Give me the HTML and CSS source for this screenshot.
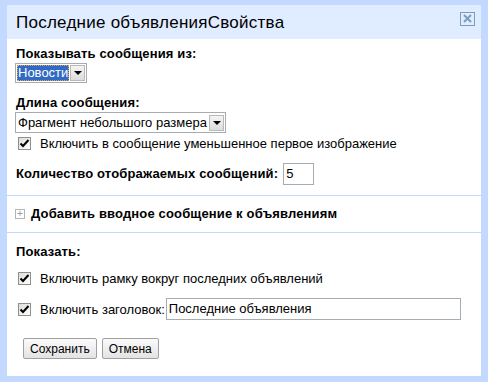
FILE: index.html
```html
<!DOCTYPE html>
<html lang="ru">
<head>
    <meta charset="UTF-8">
    <title>Последние объявления - Свойства</title>
    <link rel="stylesheet" href="styles.css">
</head>
<body>
<div class="dialog">
    <div class="dialog-header">
        <span class="dialog-title">Последние объявленияСвойства</span>
        <span class="close-box">
            <svg width="13" height="12" viewBox="0 0 13 12">
                <path d="M3 2 L10 9 M10 2 L3 9" stroke="#7b9ebd" stroke-width="2"/>
            </svg>
        </span>
    </div>

    <div class="section section-main">
        <div class="label">Показывать сообщения из:</div>
        <div class="select select-source">
            <span class="select-value selected">Новости</span>
            <span class="select-arrow"></span>
        </div>

        <div class="label label-gap">Длина сообщения:</div>
        <div class="select select-length">
            <span class="select-value">Фрагмент небольшого размера</span>
            <span class="select-arrow"></span>
        </div>
        <div class="check-row check-row-first">
            <span class="check"><svg width="11" height="11" viewBox="0 0 11 11"><path d="M1.5 5.5 L4 8 L9.5 2" fill="none" stroke="#000" stroke-width="2"/></svg></span>
            <span>Включить в сообщение уменьшенное первое изображение</span>
        </div>

        <div class="count-row">
            <span class="label">Количество отображаемых сообщений:</span>
            <span class="text-input count-input">5</span>
        </div>
    </div>

    <div class="section section-intro">
        <span class="plus-box">+</span>
        <span class="label">Добавить вводное сообщение к объявлениям</span>
    </div>

    <div class="section section-show">
        <div class="label">Показать:</div>
        <div class="check-row check-row-frame">
            <span class="check"><svg width="11" height="11" viewBox="0 0 11 11"><path d="M1.5 5.5 L4 8 L9.5 2" fill="none" stroke="#000" stroke-width="2"/></svg></span>
            <span>Включить рамку вокруг последних объявлений</span>
        </div>
        <div class="check-row check-row-title">
            <span class="check"><svg width="11" height="11" viewBox="0 0 11 11"><path d="M1.5 5.5 L4 8 L9.5 2" fill="none" stroke="#000" stroke-width="2"/></svg></span>
            <span class="title-label">Включить заголовок:</span>
            <span class="text-input title-input">Последние объявления</span>
        </div>
        <div class="buttons">
            <button class="button">Сохранить</button>
            <button class="button">Отмена</button>
        </div>
    </div>
</div>
</body>
</html>
```

FILE: styles.css
```css
body {
    background-color: #c3d9ff;
    margin: 0;
    padding: 0;
    font-size: 13px;
    font-family: "Liberation Sans", Arial, sans-serif;
    color: #000;
}
.dialog {
    margin: 5px 0 0 7px;
    width: 474px;
    height: 371px;
    background-color: #fff;
    display: flex;
    flex-direction: column;
}
.dialog-header {
    height: 34px;
    background-color: #e0ecff;
    display: flex;
    justify-content: space-between;
    align-items: center;
    padding: 0 6px 0 9px;
}
.dialog-title {
    font-size: 17px;
    letter-spacing: 0.25px;
    margin-top: 1px;
}
.close-box {
    align-self: flex-start;
    margin-top: 7px;
    width: 13px;
    height: 12px;
    border: 1px solid #7b9ebd;
    display: flex;
}
.section {
    padding: 0 9px;
    border-bottom: 1px solid #c3d9ff;
}
.section-main {
    padding-top: 7px;
    padding-bottom: 10px;
}
.label {
    font-weight: bold;
    line-height: 16px;
    letter-spacing: 0.15px;
}
.label-gap {
    margin-top: 12px;
}
.select {
    display: inline-flex;
    align-items: center;
    border: 1px solid #a5acb2;
    margin-left: -1px;
    background-color: #fff;
    padding: 1px;
    height: 16px;
}
.select-source {
    margin-top: 1px;
}
.select-length {
    margin-top: 1px;
    height: 17px;
}
.select-value {
    line-height: 16px;
    padding: 0 1px;
}
.select-value.selected {
    background-color: #316ac5;
    color: #fff;
    outline: 1px dotted #e8a33d;
    outline-offset: -1px;
}
.select-arrow {
    width: 15px;
    height: 16px;
    margin-left: 1px;
    box-sizing: border-box;
    border: 1px solid #b9b9b9;
    background: linear-gradient(#f4f4f4, #dcdcdc);
    position: relative;
}
.select-arrow::after {
    content: "";
    position: absolute;
    left: 3px;
    top: 5px;
    border-left: 4px solid transparent;
    border-right: 4px solid transparent;
    border-top: 4px solid #000;
}
.check-row {
    display: flex;
    align-items: center;
    height: 16px;
}
.check {
    width: 11px;
    height: 11px;
    border: 1px solid #8e8f8f;
    background: linear-gradient(135deg, #dcdcd7, #fff);
    margin: 0 9px 0 2px;
    display: flex;
}
.check-row-first {
    margin-top: 2px;
}
.count-row {
    margin-top: 12px;
    display: flex;
    align-items: center;
    height: 22px;
}
.text-input {
    box-sizing: border-box;
    height: 22px;
    border: 1px solid #a5acb2;
    padding: 0 2px;
    line-height: 20px;
    display: inline-block;
}
.count-input {
    width: 31px;
    margin-left: 5px;
}
.section-intro {
    height: 36px;
    display: flex;
    align-items: center;
}
.plus-box {
    box-sizing: border-box;
    width: 10px;
    height: 10px;
    border: 1px solid #b4b4b4;
    color: #9a9a9a;
    font-size: 10px;
    line-height: 7px;
    text-align: center;
    margin: 0 6px 0 -1px;
}
.section-show {
    border-bottom: none;
    padding-top: 11px;
}
.check-row-frame {
    margin-top: 10px;
}
.check-row-title {
    margin-top: 12px;
    height: 22px;
}
.title-label {
    margin-right: 1px;
}
.title-input {
    width: 295px;
}
.buttons {
    margin-top: 18px;
    margin-left: 7px;
    display: flex;
    gap: 5px;
}
button {
    font-family: "Liberation Sans", Arial, sans-serif;
    font-size: 12px;
    height: 21px;
    padding: 0 6px;
    border: 1px solid #a0a0a0;
    border-radius: 2px;
    background: linear-gradient(#fbfbfb, #e3e3e3);
    color: #000;
}
```
